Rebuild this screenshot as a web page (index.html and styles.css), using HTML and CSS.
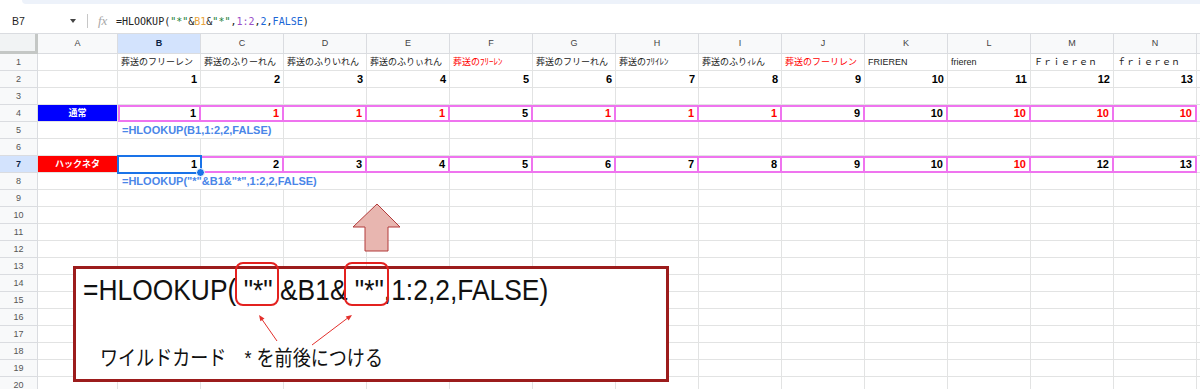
FILE: index.html
```html
<!DOCTYPE html>
<html lang="ja">
<head>
  <meta charset="UTF-8">
  <title>HLOOKUP ワイルドカード</title>
  <link rel="stylesheet" href="styles.css">
</head>
<body>
  <div class="app">
    <div class="toolbar-edge"></div>
    <div class="formula-bar">
      <div class="name-box"><span>B7</span><span class="caret"></span></div>
      <div class="divider"></div>
      <div class="fx">fx</div>
      <div class="formula">=HLOOKUP(<span class="f-str">"*"</span>&amp;<span class="f-ref1">B1</span>&amp;<span class="f-str">"*"</span>,<span class="f-ref2">1:2</span>,<span class="f-num">2</span>,<span class="f-num">FALSE</span>)</div>
    </div>

    <div class="sheet" id="sheet"></div>

    <div class="callout">
      <div class="callout-formula">=HLOOKUP( "*" &amp;B1&amp; "*",1:2,2,FALSE)</div>
      <div class="callout-note">ワイルドカード　* を前後につける</div>
    </div>

    <svg class="overlay" width="1200" height="389" viewBox="0 0 1200 389">
      <!-- 上向きの矢印 -->
      <polygon points="377,204 400,227 388,227 388,251 365,251 365,227 353,227" fill="#e8b6b0" stroke="#b23b3b" stroke-width="1"/>
      <!-- "*" を囲む枠 -->
      <rect x="236" y="263" width="42" height="42" rx="7" fill="none" stroke="#e3211f" stroke-width="2"/>
      <rect x="345" y="263" width="43" height="42" rx="7" fill="none" stroke="#e3211f" stroke-width="2"/>
      <!-- 細い矢印 -->
      <line x1="277" y1="341" x2="261" y2="318" stroke="#e3302c" stroke-width="1"/>
      <polygon points="259,315 264.5,318.5 260.4,321.3" fill="#e3302c"/>
      <line x1="312" y1="345" x2="349" y2="317" stroke="#e3302c" stroke-width="1"/>
      <polygon points="352,315 348.7,320.6 345.7,316.6" fill="#e3302c"/>
    </svg>
  </div>

  <script>
const cols = "ABCDEFGHIJKLMN".split("");
const sheet = document.getElementById("sheet");

// 1行目のテキスト（B〜N）
const titles = [
  "葬送のフリーレン", "葬送のふりーれん", "葬送のふりいれん", "葬送のふりぃれん",
  "葬送のﾌﾘｰﾚﾝ", "葬送のフリーれん", "葬送のﾌﾘｲﾚﾝ", "葬送のふりｨﾚん",
  "葬送のフーリレン", "FRIEREN", "frieren", "Ｆｒｉｅｒｅｎ", "ｆｒｉｅｒｅｎ"
];
const redTitles = [4, 8];

// 4行目と7行目の結果
const normal = [1, 1, 1, 1, 5, 1, 1, 1, 9, 10, 10, 10, 10];
const hack = [1, 2, 3, 4, 5, 6, 7, 8, 9, 10, 10, 12, 13];

function cell(cls, text) {
  const d = document.createElement("div");
  d.className = cls;
  if (text !== undefined) d.textContent = text;
  sheet.appendChild(d);
  return d;
}

// 列ヘッダー
cell("corner");
cols.forEach(c => cell(c === "B" ? "head sel" : "head", c));
cell("head");

for (let r = 1; r <= 20; r++) {
  cell(r === 7 ? "rh sel" : "rh", r);

  if (r === 4) cell("c tag blue", "通常");
  else if (r === 7) cell("c tag red", "ハックネタ");
  else cell("c");

  for (let i = 0; i < 13; i++) {
    if (r === 1) {
      const d = cell("c txt", titles[i]);
      if (redTitles.includes(i)) d.classList.add("red-text");
    } else if (r === 2) {
      cell("c num", i + 1);
    } else if (r === 4 || r === 7) {
      const v = (r === 4 ? normal : hack)[i];
      let cls = "c num hit";
      if (i === 0) cls = r === 7 ? "c num selected" : "c num hit first";
      const d = cell(cls, v);
      // 2行目の値と違うものは赤
      if (v !== i + 1) d.classList.add("red-text");
      if (r === 7 && i === 0) {
        const h = document.createElement("span");
        h.className = "handle";
        d.appendChild(h);
      }
    } else if (r === 5 && i === 0) {
      cell("c fcell span2", "=HLOOKUP(B1,1:2,2,FALSE)");
      i += 1;
    } else if (r === 8 && i === 0) {
      cell("c fcell span3", '=HLOOKUP("*"&B1&"*",1:2,2,FALSE)');
      i += 2;
    } else {
      cell("c");
    }
  }
  cell("c");
}
  </script>
</body>
</html>
```

FILE: styles.css
```css
body {
  margin: 0;
  font-family: "Liberation Sans", Arial, "Noto Sans CJK JP", sans-serif;
  background: #fff;
  overflow: hidden;
}

.app {
  position: relative;
  width: 1200px;
  height: 389px;
  overflow: hidden;
}

/* 数式バー */
.toolbar-edge {
  height: 4px;
  margin-left: 22px;
  background: #edf2fa;
  border-bottom-left-radius: 4px;
}

.formula-bar {
  height: 29px;
  display: flex;
  align-items: center;
  padding-top: 5px;
  box-sizing: border-box;
}

.name-box {
  width: 87px;
  display: flex;
  align-items: center;
  padding-left: 12px;
  box-sizing: border-box;
  font-size: 10.5px;
  color: #1f1f1f;
}

.caret {
  margin-left: auto;
  margin-right: 11px;
  width: 0;
  height: 0;
  border-left: 3.5px solid transparent;
  border-right: 3.5px solid transparent;
  border-top: 4px solid #444;
}

.divider {
  width: 1px;
  height: 14px;
  background: #c7c7c7;
}

.fx {
  width: 19px;
  padding-left: 10px;
  box-sizing: border-box;
  font: italic 13px "Liberation Serif", serif;
  color: #a8a8a8;
  margin-right: 9px;
}

.formula {
  font-family: "DejaVu Sans Mono", monospace;
  font-size: 10px;
  color: #222;
  white-space: nowrap;
}

.f-str { color: #188038; }
.f-ref1 { color: #e8a33a; }
.f-ref2 { color: #9a4fc8; }
.f-num { color: #1a66d6; }

/* シート */
.sheet {
  display: grid;
  grid-template-columns: 38px 80px repeat(13, 83px) 1fr;
  grid-template-rows: 20px repeat(20, 17px);
  border-top: 1px solid #dadce0;
}

.sheet > div {
  box-sizing: border-box;
  border-right: 1px solid #e2e3e3;
  border-bottom: 1px solid #e2e3e3;
  white-space: nowrap;
  overflow: hidden;
}

.corner {
  background: #f1f3f4;
  border-right: 3px solid #c4c7c5 !important;
  border-bottom: 3px solid #c4c7c5 !important;
}

.head {
  background: #f8f9fa;
  color: #444;
  font-size: 9px;
  line-height: 19px;
  text-align: center;
  border-color: #dadce0 !important;
}

.rh {
  background: #f8f9fa;
  color: #555;
  font-size: 9px;
  line-height: 16px;
  text-align: center;
  border-color: #dadce0 !important;
}

.head.sel,
.rh.sel {
  background: #d3e3fd;
  color: #0b1f44;
  font-weight: bold;
}

.c {
  font-size: 11px;
  line-height: 17px;
  padding: 0 3px;
  color: #000;
}

.txt {
  font-size: 9px;
  color: #222;
}

.num {
  font-weight: bold;
  text-align: right;
}

.red-text { color: #f00 !important; }

/* 数式の説明（隣のセルへはみ出す） */
.fcell {
  font-weight: bold;
  color: #4a86e8;
  padding-left: 4px;
}

.span2 { grid-column: span 2; }
.span3 { grid-column: span 3; }

.tag {
  color: #fff;
  font-weight: bold;
  font-size: 9px;
  text-align: center;
}

.tag.blue { background: #0000ff; }
.tag.red { background: #ff0000; }

/* 条件付き書式の枠 */
.hit {
  border-right: 2px solid #ef74ef !important;
  border-bottom: 2px solid #ef74ef !important;
  box-shadow: inset 0 2px 0 #ef74ef;
}

.hit.first {
  box-shadow: inset 2px 2px 0 #ef74ef;
}

.selected {
  position: relative;
  overflow: visible !important;
  outline: 2px solid #1a73e8;
  outline-offset: -1px;
  z-index: 1;
}

.handle {
  position: absolute;
  right: -5px;
  bottom: -5px;
  width: 7px;
  height: 7px;
  border-radius: 50%;
  background: #1a73e8;
  border: 1px solid #fff;
}

/* 説明ボックス */
.callout {
  position: absolute;
  left: 73px;
  top: 266px;
  width: 596px;
  height: 116px;
  box-sizing: border-box;
  border: 3px solid #9c1c1c;
  background: #fff;
  padding: 6px 0 0 7px;
}

.callout-formula {
  font-size: 30px;
  line-height: 30px;
  color: #111;
  white-space: nowrap;
  transform: scaleX(0.88);
  transform-origin: left;
}

.callout-note {
  margin: 41px 0 0 17px;
  font-size: 21px;
  line-height: 24px;
  color: #111;
  white-space: nowrap;
  transform: scaleX(0.86);
  transform-origin: left;
}

.overlay {
  position: absolute;
  left: 0;
  top: 0;
  pointer-events: none;
}
```
